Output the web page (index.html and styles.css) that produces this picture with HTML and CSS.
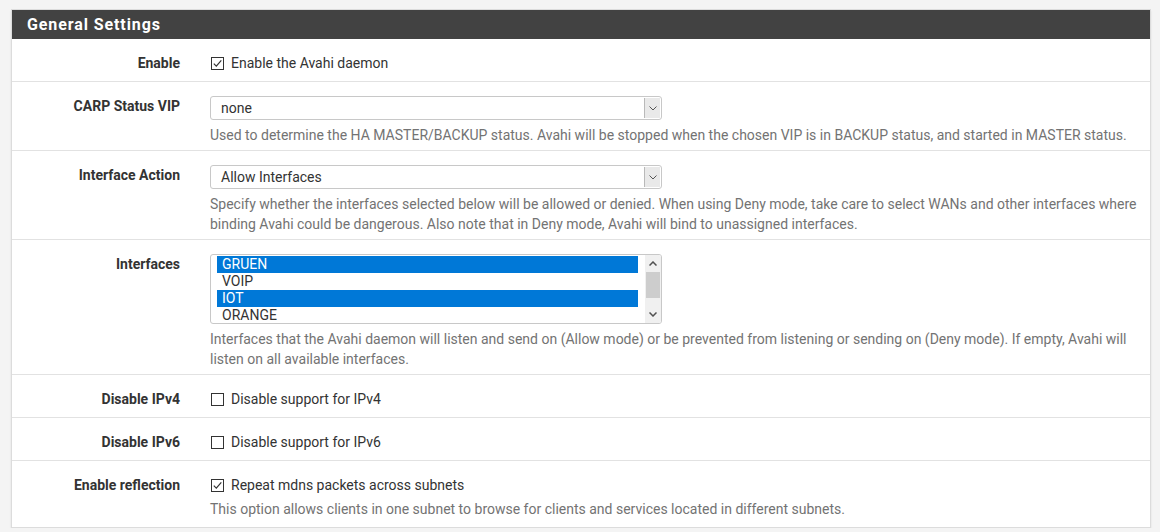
FILE: index.html
```html
<!DOCTYPE html>
<html>
<head>
<meta charset="utf-8">
<link rel="stylesheet" href="styles.css">
</head>
<body>
<div class="panel">
  <div class="panel-heading"><h2 class="panel-title">General Settings</h2></div>
  <div class="panel-body">
    <div class="form-group">
      <div class="label">Enable</div>
      <div class="field">
        <div class="check-line"><span class="cbox checked"><svg viewBox="0 0 11 11" width="11" height="11"><path d="M1.8 5.6 L4.3 8.1 L9.3 2.4" fill="none" stroke="#333" stroke-width="1.2"/></svg></span>Enable the Avahi daemon</div>
      </div>
    </div>
    <div class="form-group">
      <div class="label">CARP Status VIP</div>
      <div class="field">
        <div class="select"><span class="select-text">none</span><span class="select-arrow"><svg viewBox="0 0 8 5" width="8" height="5"><path d="M0.5 0.5 L4 4 L7.5 0.5" fill="none" stroke="#555" stroke-width="1"/></svg></span></div>
        <div class="help">Used to determine the HA MASTER/BACKUP status. Avahi will be stopped when the chosen VIP is in BACKUP status, and started in MASTER status.</div>
      </div>
    </div>
    <div class="form-group">
      <div class="label">Interface Action</div>
      <div class="field">
        <div class="select"><span class="select-text">Allow Interfaces</span><span class="select-arrow"><svg viewBox="0 0 8 5" width="8" height="5"><path d="M0.5 0.5 L4 4 L7.5 0.5" fill="none" stroke="#555" stroke-width="1"/></svg></span></div>
        <div class="help">Specify whether the interfaces selected below will be allowed or denied. When using Deny mode, take care to select WANs and other interfaces where binding Avahi could be dangerous. Also note that in Deny mode, Avahi will bind to unassigned interfaces.</div>
      </div>
    </div>
    <div class="form-group">
      <div class="label">Interfaces</div>
      <div class="field">
        <div class="listbox">
          <div class="options">
            <div class="option selected">GRUEN</div>
            <div class="option">VOIP</div>
            <div class="option selected">IOT</div>
            <div class="option">ORANGE</div>
          </div>
          <div class="scrollbar">
            <span class="sb-btn"><svg viewBox="0 0 8 5" width="8" height="5"><path d="M0.5 4.5 L4 1 L7.5 4.5" fill="none" stroke="#505050" stroke-width="1.5"/></svg></span>
            <span class="sb-track"><span class="sb-thumb"></span></span>
            <span class="sb-btn"><svg viewBox="0 0 8 5" width="8" height="5"><path d="M0.5 0.5 L4 4 L7.5 0.5" fill="none" stroke="#505050" stroke-width="1.5"/></svg></span>
          </div>
        </div>
        <div class="help">Interfaces that the Avahi daemon will listen and send on (Allow mode) or be prevented from listening or sending on (Deny mode). If empty, Avahi will listen on all available interfaces.</div>
      </div>
    </div>
    <div class="form-group">
      <div class="label">Disable IPv4</div>
      <div class="field">
        <div class="check-line"><span class="cbox"></span>Disable support for IPv4</div>
      </div>
    </div>
    <div class="form-group">
      <div class="label">Disable IPv6</div>
      <div class="field">
        <div class="check-line"><span class="cbox"></span>Disable support for IPv6</div>
      </div>
    </div>
    <div class="form-group last">
      <div class="label">Enable reflection</div>
      <div class="field">
        <div class="check-line"><span class="cbox checked"><svg viewBox="0 0 11 11" width="11" height="11"><path d="M1.8 5.6 L4.3 8.1 L9.3 2.4" fill="none" stroke="#333" stroke-width="1.2"/></svg></span>Repeat mdns packets across subnets</div>
        <div class="help after-check">This option allows clients in one subnet to browse for clients and services located in different subnets.</div>
      </div>
    </div>
  </div>
</div>
</body>
</html>
```

FILE: styles.css
```css
html, body {
  margin: 0;
  padding: 0;
  background: #f4f4f4;
}
body {
  font-family: Roboto, "Liberation Sans", sans-serif;
  font-size: 14px;
  line-height: 20px;
  color: #333;
  padding: 9px 10px 0 11px;
}
.panel {
  width: 1138px;
  background: #fff;
  border: 1px solid #dcdcdc;
  box-shadow: 0 2px 2px rgba(0, 0, 0, 0.09);
}
.panel-heading {
  background: #424242;
  height: 29px;
  display: flex;
  align-items: center;
  padding-left: 15px;
}
.panel-title {
  margin: 0;
  color: #fff;
  font-size: 16px;
  font-weight: 700;
  letter-spacing: 0.9px;
  line-height: 20px;
}
.form-group {
  display: grid;
  grid-template-columns: 168px 1fr;
  column-gap: 30px;
  padding: 14px 10px 5px 0;
  border-bottom: 1px solid #e2e2e2;
}
.form-group.last {
  border-bottom: none;
  padding-bottom: 8px;
}
.label {
  text-align: right;
  font-weight: 700;
  color: #333;
}
.check-line {
  display: flex;
  align-items: center;
  height: 20px;
  padding-bottom: 3px;
  color: #333;
}
.cbox {
  width: 11px;
  height: 11px;
  border: 1px solid #333;
  background: #fff;
  margin: 0 7px 0 1px;
  display: inline-flex;
  align-items: center;
  justify-content: center;
  flex: none;
}
.cbox svg { display: block; }
.select {
  width: 450px;
  height: 22px;
  border: 1px solid #c8c8c8;
  border-radius: 3px;
  display: flex;
  align-items: center;
  justify-content: space-between;
  background: #fff;
}
.select-text {
  padding-left: 10px;
  color: #333;
}
.select-arrow {
  width: 15px;
  height: 20px;
  margin-right: 1px;
  background: #e9e9e9;
  border-left: 1px solid #b9b9b9;
  display: flex;
  align-items: center;
  justify-content: center;
}
.help {
  margin-top: 5px;
  color: #737373;
}
.help.after-check {
  margin-top: 1px;
}
.listbox {
  width: 450px;
  height: 68px;
  border: 1px solid #c8c8c8;
  border-radius: 3px;
  display: flex;
  overflow: hidden;
}
.options {
  flex: 1;
  padding: 1px 7px 0 6px;
}
.option {
  height: 17px;
  line-height: 17px;
  padding-left: 5px;
  color: #333;
}
.option.selected {
  background: #0078d7;
  color: #fff;
}
.scrollbar {
  width: 16px;
  background: #f0f0f0;
  display: flex;
  flex-direction: column;
}
.sb-btn {
  height: 17px;
  display: flex;
  align-items: center;
  justify-content: center;
}
.sb-track {
  flex: 1;
  display: flex;
  flex-direction: column;
}
.sb-thumb {
  height: 26px;
  margin: 0 1px;
  background: #cdcdcd;
}
```
